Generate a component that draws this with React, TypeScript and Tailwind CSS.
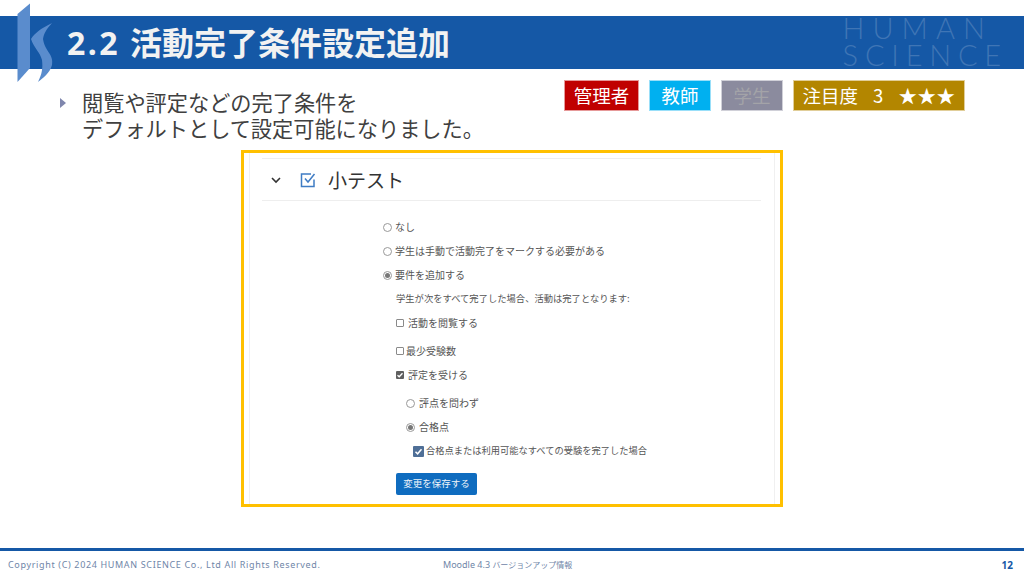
const jp = 'font-["Noto_Sans_CJK_JP","Noto_Sans",sans-serif]';

function Radio({ checked }: { checked?: boolean }) {
  return (
    <span className="flex h-[9px] w-[9px] shrink-0 items-center justify-center rounded-full border border-[#999999] bg-white">
      {checked && <span className="h-[5px] w-[5px] rounded-full bg-[#777777]" />}
    </span>
  );
}

function Check({ checked }: { checked?: boolean }) {
  if (checked) {
    return (
      <span className="flex h-[8px] w-[8px] shrink-0 items-center justify-center rounded-[1px] bg-[#5f5f5f]">
        <svg viewBox="0 0 8 8" className="h-[8px] w-[8px]" fill="none" stroke="#fff" strokeWidth="1.3">
          <path d="M1.5 4.2 3.2 5.8 6.5 2.2" />
        </svg>
      </span>
    );
  }
  return <span className="h-[8px] w-[8px] shrink-0 rounded-[1px] border border-[#8a8a8a] bg-white" />;
}

function Logo() {
  return (
    <svg viewBox="0 0 60 90" className="absolute left-[15px] top-[2px] h-[90px] w-[60px]">
      <path d="M2.5 12 15 1.5V66L2.5 80Z" fill="#5a8ccd" />
      <path d="M16 37C20 31 25 27 37 21 31 28 29 31 28 37 30 50 39 52 37 63 35 71 28 76 23 80 27 72 28 66 27 58 25 50 19 46 16 37Z" fill="#5a8ccd" />
    </svg>
  );
}

function Badge({ className, children }: { className: string; children: React.ReactNode }) {
  return (
    <div className={`flex h-[31px] items-center justify-center border border-white/60 text-[18.5px] leading-none ${className}`}>
      {children}
    </div>
  );
}

function Row({ className, children }: { className?: string; children: React.ReactNode }) {
  return <div className={`flex h-[24px] items-center ${className ?? ''}`}>{children}</div>;
}

export default function App() {
  return (
    <div className={`relative flex h-[576px] w-[1024px] flex-col overflow-hidden bg-white ${jp}`}>
      <div className="mt-[16px] flex h-[53px] shrink-0 items-center justify-between bg-[#1558a6] pl-[67px] pr-[16px]">
        <h1 className="flex items-center gap-[10px] font-['Noto_Sans','Noto_Sans_CJK_JP',sans-serif] text-[32px] font-bold leading-none text-[#f2f2f2]">
          <span className="tracking-[2.5px]">2.2</span>
          <span>活動完了条件設定追加</span>
        </h1>
        <div className="mb-[4px] flex flex-col items-start font-['Lato',sans-serif] text-[29px] font-light leading-[27px] text-[#3f75b5]">
          <span className="tracking-[8px]">HUMAN</span>
          <span className="tracking-[6.8px]">SCIENCE</span>
        </div>
      </div>
      <Logo />

      <div className="flex h-[81px] shrink-0 items-start justify-between pl-[60px] pr-[59px]">
        <div className="mt-[20px] flex items-start">
          <span className="mt-[9px] h-0 w-0 border-y-[5px] border-l-[6px] border-y-transparent border-l-[#7f86ad]" />
          <p className="ml-[16px] text-[21.2px] leading-[26px] text-[#404040]">
            閲覧や評定などの完了条件を
            <br />
            デフォルトとして設定可能になりました。
          </p>
        </div>
        <div className="mt-[11px] flex gap-[10px]">
          <Badge className="w-[75px] bg-[#c00000] text-white">管理者</Badge>
          <Badge className="w-[62px] bg-[#00b0f0] text-white">教師</Badge>
          <Badge className="w-[62px] bg-[#8b8b9e] text-[#a3a3a8]">学生</Badge>
          <Badge className="w-[172px] gap-[15px] bg-[#b38600] text-white">
            <span>注目度</span>
            <span>3</span>
            <span className="tracking-[0.5px]">★★★</span>
          </Badge>
        </div>
      </div>

      <div className="ml-[241px] h-[357px] w-[542px] shrink-0 border-[3px] border-[#ffc000] bg-white">
        <div className="mx-[5px] h-full border-x border-[#f0f0f0] pl-[12px] pr-[13px] pt-[5px]">
          <div className="flex h-[43px] items-center border-y border-[#eeeeee] pl-[8px] text-[#333333]">
            <svg viewBox="0 0 12 12" className="h-[12px] w-[12px]" fill="none" stroke="#333" strokeWidth="1.6">
              <path d="M2 4 6 8 10 4" />
            </svg>
            <svg viewBox="0 0 16 16" className="ml-[18px] h-[16px] w-[16px]" fill="none" stroke="#3f7cc4" strokeWidth="1.5">
              <path d="M14 7.5V14.5H1.5V2H11" />
              <path d="M5 6.5 8 10 14.5 2" />
            </svg>
            <span className="ml-[12px] text-[19px] leading-none">小テスト</span>
          </div>

          <div className="ml-[121px] mt-[14px] text-[10px] leading-none text-[#555555]">
            <Row className="gap-[3px]"><Radio />なし</Row>
            <Row className="gap-[3px]"><Radio />学生は手動で活動完了をマークする必要がある</Row>
            <Row className="gap-[3px]"><Radio checked />要件を追加する</Row>
            <Row className="pl-[13px] text-[9.3px]">学生が次をすべて完了した場合、活動は完了となります:</Row>
            <Row className="gap-[4px] pl-[13px]"><Check />活動を閲覧する</Row>
            <Row className="mt-[4px] gap-[2px] pl-[13px]"><Check />最少受験数</Row>
            <Row className="gap-[4px] pl-[13px]"><Check checked />評定を受ける</Row>
            <Row className="mt-[4px] gap-[4px] pl-[23px]"><Radio />評点を問わず</Row>
            <Row className="gap-[4px] pl-[23px]"><Radio checked />合格点</Row>
            <Row className="gap-[2px] pl-[30px] text-[9.25px]">
              <span className="flex h-[11px] w-[11px] items-center justify-center rounded-[1px] bg-[#4f6f97]">
                <svg viewBox="0 0 11 11" className="h-[11px] w-[11px]" fill="none" stroke="#fff" strokeWidth="1.5">
                  <path d="M2.5 5.7 4.6 7.8 8.5 3.2" />
                </svg>
              </span>
              合格点または利用可能なすべての受験を完了した場合
            </Row>
            <button className="ml-[13px] mt-[10px] flex h-[22px] w-[81px] items-center justify-center rounded-[2px] bg-[#0f6cbf] text-[9.5px] text-[#eef4fa]">
              変更を保存する
            </button>
          </div>
        </div>
      </div>

      <footer className="mt-auto flex h-[28px] shrink-0 items-center border-t-[3px] border-[#1558a6] pl-[8px] pr-[11px] pt-[3px] font-['Noto_Sans','Noto_Sans_CJK_JP',sans-serif] text-[9px] text-[#6f86a8]">
        <span className="w-[435px] tracking-[0.65px]">Copyright (C) 2024 HUMAN SCIENCE Co., Ltd All Rights Reserved.</span>
        <span>Moodle 4.3 <span className="text-[8px]">バージョンアップ情報</span></span>
        <span className="ml-auto text-[10px] font-bold text-[#1558a6]">12</span>
      </footer>
    </div>
  );
}
